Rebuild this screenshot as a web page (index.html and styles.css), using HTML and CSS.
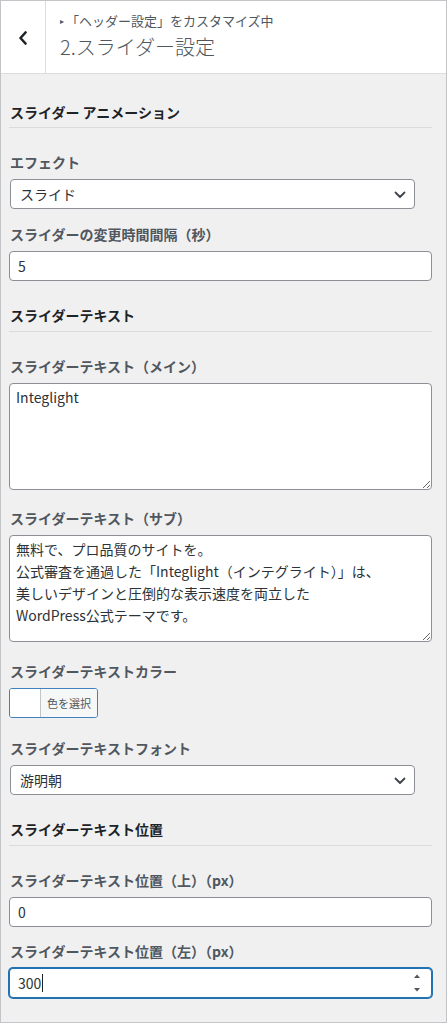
FILE: index.html
```html
<!DOCTYPE html>
<html lang="ja">
<head>
<meta charset="utf-8">
<title>2.スライダー設定</title>
<link rel="stylesheet" href="styles.css">
</head>
<body>
<div class="panel">
  <header class="panel-head">
    <div class="back">
      <svg width="10" height="14" viewBox="0 0 10 14"><polyline points="7.5,1.5 2.5,7 7.5,12.5" fill="none" stroke="#1d2327" stroke-width="2.6" stroke-linecap="round" stroke-linejoin="round"/></svg>
    </div>
    <div class="head-text">
      <div class="action"><span class="tri">▸</span>「ヘッダー設定」をカスタマイズ中</div>
      <h1 class="title">2.スライダー設定</h1>
    </div>
  </header>

  <main class="content">
    <h2 class="section-title first">スライダー アニメーション</h2>

    <div class="field f15">
      <div class="label">エフェクト</div>
      <div class="select"><span>スライド</span><svg class="chev" width="12" height="8" viewBox="0 0 12 8"><polyline points="1.5,1.5 6,6 10.5,1.5" fill="none" stroke="#3c434a" stroke-width="1.8" stroke-linecap="round" stroke-linejoin="round"/></svg></div>
    </div>

    <div class="field">
      <div class="label">スライダーの変更時間間隔（秒）</div>
      <div class="input">5</div>
    </div>

    <h2 class="section-title">スライダーテキスト</h2>

    <div class="field f18">
      <div class="label">スライダーテキスト（メイン）</div>
      <textarea class="textarea">Integlight</textarea>
    </div>

    <div class="field f19">
      <div class="label">スライダーテキスト（サブ）</div>
      <textarea class="textarea">無料で、プロ品質のサイトを。
公式審査を通過した「Integlight（インテグライト）」は、
美しいデザインと圧倒的な表示速度を両立した
WordPress公式テーマです。</textarea>
    </div>

    <div class="field f17">
      <div class="label">スライダーテキストカラー</div>
      <div class="color-btn"><span class="swatch"></span><span class="color-text">色を選択</span></div>
    </div>

    <div class="field">
      <div class="label">スライダーテキストフォント</div>
      <div class="select"><span>游明朝</span><svg class="chev" width="12" height="8" viewBox="0 0 12 8"><polyline points="1.5,1.5 6,6 10.5,1.5" fill="none" stroke="#3c434a" stroke-width="1.8" stroke-linecap="round" stroke-linejoin="round"/></svg></div>
    </div>

    <h2 class="section-title">スライダーテキスト位置</h2>

    <div class="field f14">
      <div class="label">スライダーテキスト位置（上）（px）</div>
      <div class="input">0</div>
    </div>

    <div class="field">
      <div class="label">スライダーテキスト位置（左）（px）</div>
      <div class="input focused"><span class="caret">300</span>
        <svg class="spin" width="10" height="22" viewBox="0 0 10 22"><polygon points="2,6 8,6 5,2.5" fill="#50575e"/><polygon points="2,16 8,16 5,19.5" fill="#50575e"/></svg>
      </div>
    </div>
  </main>
</div>
</body>
</html>
```

FILE: styles.css
```css
* { box-sizing: border-box; }

html, body {
  margin: 0;
  padding: 0;
  background: #ffffff;
}

body {
  font-family: "Noto Sans CJK JP", "Noto Sans", sans-serif;
  color: #2c3338;
  font-size: 14px;
}

.panel {
  width: 447px;
  height: 1023px;
  border: 1px solid #c3c4c7;
  background: #f0f0f1;
  display: flex;
  flex-direction: column;
  overflow: hidden;
}

.panel-head {
  display: flex;
  background: #ffffff;
  border-bottom: 1px solid #dcdcde;
  height: 73px;
  flex: 0 0 auto;
}

.back {
  width: 45px;
  border-right: 1px solid #dcdcde;
  display: flex;
  align-items: center;
  justify-content: center;
  padding-top: 1px;
}

.head-text {
  padding: 11px 0 0 14px;
}

.action {
  font-size: 13px;
  line-height: 18px;
  color: #50575e;
}

.tri {
  font-size: 8px;
  margin-right: 2px;
  vertical-align: 2px;
}

.title {
  margin: 4px 0 0;
  font-size: 20px;
  line-height: 26px;
  font-weight: 300;
  color: #50575e;
}

.content {
  padding: 28px 14px 0 8px;
}

.section-title {
  margin: 24px 0 24px;
  font-size: 14px;
  line-height: 20px;
  font-weight: 700;
  color: #1d2327;
  padding: 0 0 6px 1px;
  border-bottom: 1px solid #dcdcde;
}

.section-title.first {
  margin-top: 0;
  padding-bottom: 5px;
}

.field {
  margin-bottom: 16px;
}
.field.f14 { margin-bottom: 14px; }
.field.f15 { margin-bottom: 15px; }
.field.f17 { margin-bottom: 17px; }
.field.f18 { margin-bottom: 18px; }
.field.f19 { margin-bottom: 19px; }

.label {
  font-size: 14px;
  line-height: 20px;
  font-weight: 700;
  color: #50575e;
  margin: 0 0 7px 1px;
}

.select {
  width: 405px;
  height: 30px;
  margin-left: 1px;
  border: 1px solid #8c8f94;
  border-radius: 4px;
  background: #ffffff;
  display: flex;
  align-items: center;
  justify-content: space-between;
  padding: 0 8px 0 9px;
  font-size: 14px;
  color: #2c3338;
}

.chev { margin-top: 1px; }

.input {
  width: 100%;
  height: 30px;
  border: 1px solid #8c8f94;
  border-radius: 4px;
  background: #ffffff;
  display: flex;
  align-items: center;
  justify-content: space-between;
  padding: 0 8px 0 8px;
  font-size: 14px;
  color: #2c3338;
}

.input.focused {
  border-color: #2271b1;
  box-shadow: 0 0 0 1px #2271b1;
  padding-right: 9px;
}

.caret {
  border-right: 1px solid #1d2327;
  padding-right: 1px;
  line-height: 18px;
}

.spin {
  display: block;
}

.textarea {
  display: block;
  width: 100%;
  height: 107px;
  margin: 0;
  border: 1px solid #8c8f94;
  border-radius: 4px;
  background: #ffffff;
  padding: 2px 6px;
  font-family: "Noto Sans CJK JP", "Noto Sans", sans-serif;
  font-size: 14px;
  line-height: 22px;
  color: #2c3338;
  resize: vertical;
  overflow: hidden;
}

.color-btn {
  display: inline-flex;
  height: 30px;
  border: 1px solid #3f82bf;
  border-radius: 3px;
  overflow: hidden;
  background: #ffffff;
}

.swatch {
  width: 30px;
  background: #ffffff;
}

.color-text {
  background: #f6f7f7;
  border-left: 1px solid #c3c4c7;
  padding: 0 6px;
  font-size: 11px;
  line-height: 28px;
  color: #50575e;
}
```
